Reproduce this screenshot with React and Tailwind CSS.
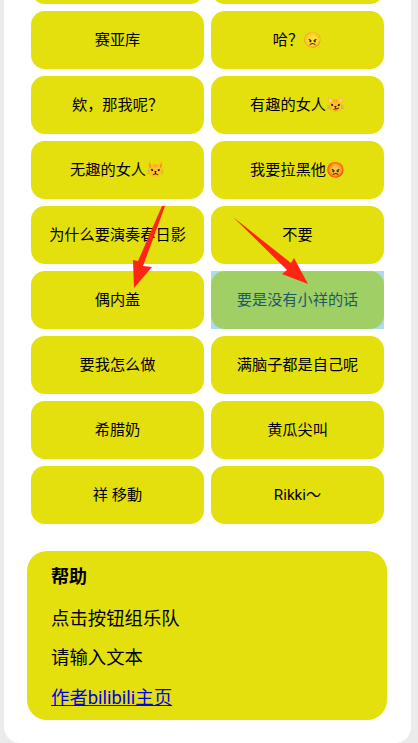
const font = { fontFamily: 'Roboto, "Noto Sans CJK SC", "Noto Color Emoji", sans-serif' };

const rows = [
  ['', ''],
  ['赛亚库', '哈？😠'],
  ['欸，那我呢？', '有趣的女人😼'],
  ['无趣的女人😾', '我要拉黑他😡'],
  ['为什么要演奏春日影', '不要'],
  ['偶内盖', '要是没有小祥的话'],
  ['要我怎么做', '满脑子都是自己呢'],
  ['希腊奶', '黄瓜尖叫'],
  ['祥 移動', 'Rikki～'],
];

function SoundButton({ label, active }) {
  if (active) {
    return (
      <div className="bg-[#addcf0]">
        <button className="w-full h-[58px] rounded-[14px] bg-[#a0cf66] text-[15.2px] text-[#1d5a66]">{label}</button>
      </div>
    );
  }
  return <button className="w-full h-[58px] rounded-[14px] bg-[#e4e00d] text-[15.2px] text-black">{label}</button>;
}

export default function App() {
  return (
    <div className="relative h-[743px] w-[418px] overflow-hidden bg-[#ebebeb] pl-[4px] pr-[7px]" style={font}>
      <div className="h-[743px] overflow-hidden rounded-b-[16px] bg-white pl-[23px] pr-[24px]">
        <div className="-mt-[54px] ml-[4px] mr-[3px] grid grid-cols-2 gap-x-[7px] gap-y-[7px]">
          {rows.flatMap((row, i) =>
            row.map((label, j) => (
              <SoundButton key={`${i}-${j}`} label={label} active={label === '要是没有小祥的话'} />
            ))
          )}
        </div>

        <div className="mt-[27px] h-[169px] rounded-[20px] bg-[#e4e00d] pl-[24px] pt-[12px] text-[18.4px] text-black">
          <h2 className="h-[27px] text-[18px] font-bold leading-[27px]">帮助</h2>
          <p className="mt-[15px] h-[27px] leading-[27px]">点击按钮组乐队</p>
          <p className="mt-[12px] h-[27px] leading-[27px]">请输入文本</p>
          <a href="#" className="mt-[13px] block h-[27px] leading-[27px] text-[#0000ee] underline">作者bilibili主页</a>
        </div>
      </div>

      {/* red arrows drawn over the buttons */}
      <svg className="absolute left-0 top-0 pointer-events-none" width="418" height="743" viewBox="0 0 418 743">
        <polygon fill="#ff2413" points="162,206 165,206 143,266 152,267 134,288 133,260 138,261" />
        <polygon fill="#ff2413" points="233,217 291,263 294,258 308,284 282,274 287,270" />
      </svg>
    </div>
  );
}
